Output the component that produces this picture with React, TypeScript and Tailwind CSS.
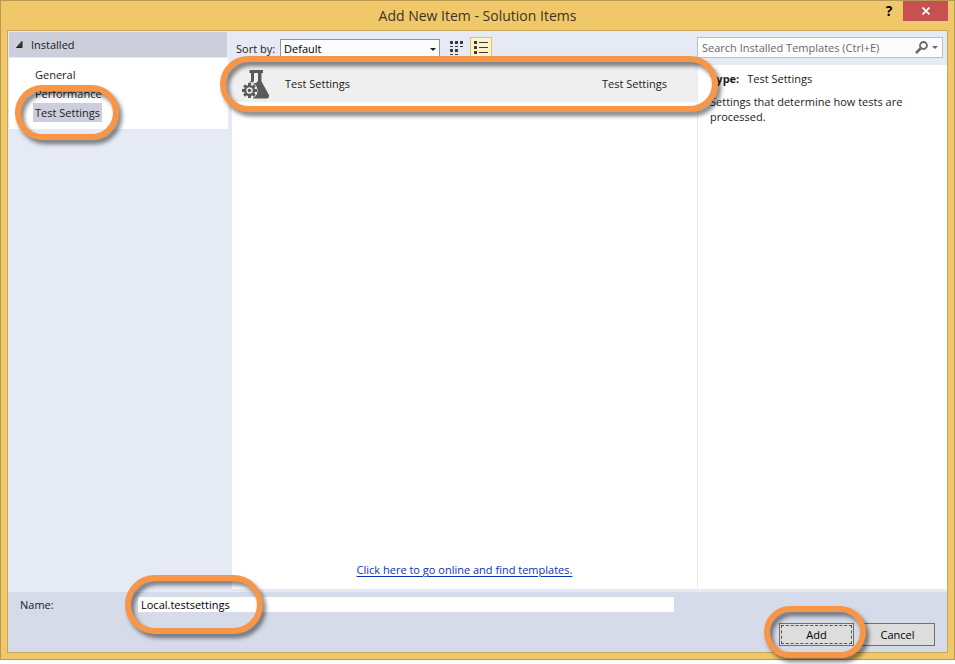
import React from "react";

function Ring({ className }: { className: string }) {
  return (
    <span
      aria-hidden="true"
      className={`pointer-events-none absolute z-10 rounded-full border-6 border-[#f79646] drop-shadow-[3px_4px_2px_rgba(0,0,0,0.5)] ${className}`}
    />
  );
}

function FlaskIcon() {
  return (
    <svg width="28" height="30" viewBox="0 0 28 30" aria-hidden="true">
      <path
        fill="#5b5a59"
        d="M7.500 1H21v3h-1.500v8.500L27 26v2l-1.500 1.500H11L6 14l3-2V4H7.500z"
      />
      <path fill="#efefef" d="M12 4h4v8l-2 2h-4l2-2z" />
      <g transform="translate(7.500 21.500)">
        <circle r="8.200" fill="#efefef" />
        <g fill="#5b5a59">
          <rect x="-1.500" y="-7.500" width="3" height="15" />
          <rect x="-1.500" y="-7.500" width="3" height="15" transform="rotate(45)" />
          <rect x="-1.500" y="-7.500" width="3" height="15" transform="rotate(90)" />
          <rect x="-1.500" y="-7.500" width="3" height="15" transform="rotate(135)" />
          <circle r="5.500" />
        </g>
        <circle r="3.200" fill="#efefef" />
        <circle r="1.800" fill="#5b5a59" />
      </g>
    </svg>
  );
}

function GridIcon() {
  return (
    <svg width="14" height="14" viewBox="0 0 14 14" fill="#3b3b3f" aria-hidden="true">
      <path d="M0 0h3v3H0zM5 0h3v3H5zM10 0h3v3h-3zM0 5h3v1H0zM5 5h3v1H5zM10 5h3v1h-3zM0 8h3v3H0zM5 8h3v3H5zM0 13h3v1H0zM5 13h3v1H5z" />
    </svg>
  );
}

function ListIcon() {
  return (
    <svg width="14" height="14" viewBox="0 0 14 14" fill="#3b3b3f" aria-hidden="true">
      <path d="M0 0h3v3H0zM5 1h9v1H5zM0 5h3v3H0zM5 6h9v1H5zM0 10h3v3H0zM5 11h9v1H5z" />
    </svg>
  );
}

export default function App() {
  return (
    <div className="flex min-h-screen flex-col bg-white pb-1 font-['Open_Sans','Noto_Sans',sans-serif] text-[11px] leading-[15px] text-[#1b1b1c]">
      <div className="flex flex-1 flex-col border border-[#b59a50] bg-[#f0c869] px-1.5 pb-1.5">
        <header className="relative flex h-[29px] items-center justify-center">
          <h1 className="text-sm text-[#3d3424]">Add New Item - Solution Items</h1>
          <div className="absolute -right-1.5 top-0 flex h-5 pr-1.5">
            <button aria-label="Help" className="w-7 text-sm leading-5 font-bold text-black">?</button>
            <button aria-label="Close" className="flex w-[45px] items-center justify-center bg-[#c75050]">
              <svg width="8" height="8" viewBox="0 0 8 8" stroke="#fff" strokeWidth="1.700" aria-hidden="true">
                <path d="M.500 .500l7 7M7.500 .500l-7 7" />
              </svg>
            </button>
          </div>
        </header>

        <main className="flex flex-1 flex-col border border-[#c9a557] bg-[#e6eaf5]">
          <div className="flex flex-1 pb-[3px]">
            <nav className="mr-1 w-[220px] shrink-0 pt-px pl-px">
              <button className="mr-px mb-px flex h-[25px] w-[218px] items-center bg-[#cccedb] pl-[7px] text-left">
                <svg width="7" height="7" viewBox="0 0 7 7" className="mr-2" aria-hidden="true">
                  <path d="M6 .500v6H.500z" fill="#3b3b3f" stroke="#1e1e1e" />
                </svg>
                Installed
              </button>
              <ul className="bg-white pt-1.5 pb-[7px] pl-6">
                <li className="flex h-5 items-center">
                  <button className="px-0.5">General</button>
                </li>
                <li className="flex h-[18px] items-center">
                  <button className="px-0.5">Performance</button>
                </li>
                <li className="flex h-5 items-center">
                  <button className="relative bg-[#cccedb] px-0.5 leading-[19px]">
                    Test Settings
                    <Ring className="-top-[18px] -right-[17px] -bottom-[18px] -left-[18px]" />
                  </button>
                </li>
              </ul>
            </nav>

            <section className="flex min-w-0 flex-1 flex-col">
              <div className="flex h-[34px] items-start pt-1.5 pl-1">
                <label htmlFor="sort" className="mr-[5px] pt-1 whitespace-nowrap">Sort by:</label>
                <div className="relative mt-0.5 w-40">
                  <select id="sort" className="block h-[18px] w-full appearance-none border border-[#8a95a8] bg-[#fcfcfc] px-[3px] text-black">
                    <option>Default</option>
                  </select>
                  <svg width="6" height="3" viewBox="0 0 6 3" className="pointer-events-none absolute top-[9px] right-1" aria-hidden="true">
                    <path d="M0 0h6L3 3z" fill="#1e1e1e" />
                  </svg>
                </div>
                <button aria-label="Small icons" className="ml-1.5 flex h-[22px] w-6 items-center pl-1">
                  <GridIcon />
                </button>
                <button aria-label="List view" className="flex h-[22px] w-[22px] items-center justify-center border border-[#e5c365] bg-[#fff3c9]">
                  <ListIcon />
                </button>
              </div>
              <div className="flex flex-1 flex-col bg-white">
                <button className="relative flex h-[37px] items-center bg-[#efefef] pr-[30px] pl-2.5 text-left">
                  <FlaskIcon />
                  <span className="ml-[15px] flex-1">Test Settings</span>
                  <span>Test Settings</span>
                  <Ring className="-top-[9px] -right-[21px] -bottom-[10px] -left-3" />
                </button>
                <div className="mt-auto pb-3 text-center">
                  <a href="#online" className="text-[#0e2fb8] underline underline-offset-2">
                    Click here to go online and find templates.
                  </a>
                </div>
              </div>
            </section>

            <aside className="flex w-[250px] shrink-0 flex-col">
              <div className="h-[34px] pt-1.5 pr-1">
                <div className="flex h-[21px] items-center border border-[#b8bfcc] bg-[#fcfcfc] pr-1 pl-1">
                  <input
                    type="search"
                    aria-label="Search Installed Templates"
                    placeholder="Search Installed Templates (Ctrl+E)"
                    className="min-w-0 flex-1 bg-transparent outline-none placeholder:text-[#6a6a6f]"
                  />
                  <button aria-label="Search" className="mr-1">
                    <svg width="13" height="13" viewBox="0 0 13 13" fill="none" stroke="#68686c" aria-hidden="true">
                      <circle cx="8.500" cy="4.500" r="3.500" strokeWidth="1.800" />
                      <path d="M6 7l-5 5" strokeWidth="2.500" />
                    </svg>
                  </button>
                  <button aria-label="Search options">
                    <svg width="6" height="3" viewBox="0 0 6 3" aria-hidden="true">
                      <path d="M0 0h6L3 3z" fill="#68686c" />
                    </svg>
                  </button>
                </div>
              </div>
              <div className="flex-1 border-l border-[#e6eaf5] bg-white px-3 pt-1.5">
                <p className="mb-2">
                  <b className="mr-2">Type:</b>
                  Test Settings
                </p>
                <p>Settings that determine how tests are processed.</p>
              </div>
            </aside>
          </div>

          <footer className="bg-[#d6dbe9] px-3 pt-[5px] pb-1.5">
            <div className="flex items-center">
              <label htmlFor="name" className="w-[118px]">Name:</label>
              <div className="relative mr-[261px] flex-1">
                <input id="name" defaultValue="Local.testsettings" className="block h-[15px] w-full bg-white px-[3px] text-black outline-none" />
                <Ring className="-top-[22px] -bottom-[22px] -left-[13px] w-[138px]" />
              </div>
            </div>
            <div className="mt-[11px] flex justify-end gap-1.5">
              <button className="relative z-10 h-[23px] w-[75px] border border-[#707070] bg-[#dddddd] p-px text-black">
                <span className="flex h-full items-center justify-center border border-dashed border-[#555]">Add</span>
                <Ring className="-top-[18px] -right-[13px] -bottom-[13px] -left-4" />
              </button>
              <button className="h-[23px] w-[75px] border border-[#707070] bg-[#dddddd] text-black">Cancel</button>
            </div>
          </footer>
        </main>
      </div>
    </div>
  );
}
